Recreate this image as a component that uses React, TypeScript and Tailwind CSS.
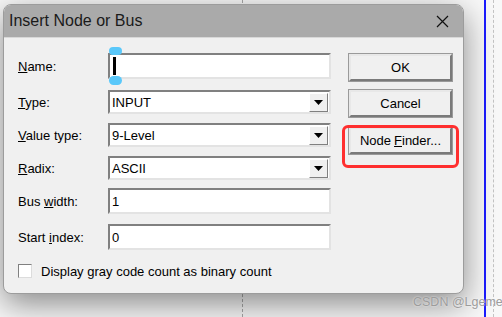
import React from 'react'

const fieldLabel = "text-[13px] text-black leading-none"

function Sunken({ children, className = "" }: { children?: React.ReactNode; className?: string }) {
  return (
    <div className={`relative flex items-center bg-white border-2 border-t-[#808080] border-l-[#808080] border-b-[#e3e3e3] border-r-[#e3e3e3] ${className}`}>
      {children}
    </div>
  )
}

function Combo({ value }: { value: string }) {
  return (
    <Sunken className="h-[24px] w-[223px]">
      <span className="flex-1 pl-[2px] text-[13px] leading-none">{value}</span>
      <div className="mr-[1px] flex h-[19px] w-[19px] items-center justify-center bg-[#f0f0f0] border border-t-white border-l-white border-b-[#808080] border-r-[#808080]">
        <svg width="9" height="5" viewBox="0 0 9 5"><path d="M0 0h9L4.5 5z" fill="#000" /></svg>
      </div>
    </Sunken>
  )
}

function Btn({ children }: { children: React.ReactNode }) {
  return (
    <div className="flex h-[27px] w-[103px] items-center justify-center bg-[#f0f0f0] border-2 border-t-[#e8e8e8] border-l-[#e8e8e8] border-b-[#7a7a7a] border-r-[#7a7a7a] outline outline-1 outline-[#9a9a9a] text-[13px] leading-none">
      {children}
    </div>
  )
}

export default function App() {
  return (
    <main className="relative h-[317px] w-[502px] overflow-hidden bg-[#f8f8f8]" style={{ fontFamily: '"Liberation Sans", Arial, sans-serif' }}>
      {/* canvas guide lines behind the dialog */}
      <div className="absolute left-[242px] top-0 h-full border-l border-dashed border-[#a8a8a8]" />
      <div className="absolute left-[484px] top-0 h-full w-[2px] bg-[#1b1bff]" />
      <div className="absolute left-[493px] top-0 h-full border-l border-dashed border-[#c4c4c4]" />

      <section className="absolute left-[3px] top-[4px] flex h-[290px] w-[461px] flex-col overflow-hidden rounded-[8px] border border-[#9c9c9c] bg-[#f0f0f0] shadow-[0_10px_32px_rgba(0,0,0,0.45)]">
        <header className="flex h-[32px] items-center justify-between bg-[#aaaaaa] pl-[5px] pr-[14px]">
          <h1 className="text-[16px] leading-none text-[#1a1a1a]">Insert Node or Bus</h1>
          <svg width="13" height="13" viewBox="0 0 13 13"><path d="M1 1l11 11M12 1L1 12" stroke="#111" strokeWidth="1.2" /></svg>
        </header>

        <div className="flex flex-1 border-t border-[#d8d8d8] pl-[14px] pt-[15px]">
          <div className="flex flex-col">
            <div className="flex h-[26px] items-center">
              <span className={`${fieldLabel} w-[90px]`}><u>N</u>ame:</span>
              <Sunken className="h-[26px] w-[223px]">
                <div className="ml-[3px] h-[18px] w-[3px] bg-black" />
                <div className="absolute -top-[8px] left-[-1px] h-[8px] w-[13px] rounded-full bg-[#5ac8fa]" />
                <div className="absolute -bottom-[8px] left-[-1px] h-[9px] w-[13px] rounded-full bg-[#5ac8fa]" />
              </Sunken>
            </div>
            <div className="mt-[11px] flex h-[24px] items-center">
              <span className={`${fieldLabel} w-[90px]`}><u>T</u>ype:</span>
              <Combo value="INPUT" />
            </div>
            <div className="mt-[9px] flex h-[24px] items-center">
              <span className={`${fieldLabel} w-[90px]`}><u>V</u>alue type:</span>
              <Combo value="9-Level" />
            </div>
            <div className="mt-[9px] flex h-[24px] items-center">
              <span className={`${fieldLabel} w-[90px]`}><u>R</u>adix:</span>
              <Combo value="ASCII" />
            </div>
            <div className="mt-[8px] flex h-[26px] items-center">
              <span className={`${fieldLabel} w-[90px]`}>Bus <u>w</u>idth:</span>
              <Sunken className="h-[26px] w-[223px]"><span className="pl-[2px] text-[13px] leading-none">1</span></Sunken>
            </div>
            <div className="mt-[10px] flex h-[26px] items-center">
              <span className={`${fieldLabel} w-[90px]`}>Start <u>i</u>ndex:</span>
              <Sunken className="h-[26px] w-[223px]"><span className="pl-[2px] text-[13px] leading-none">0</span></Sunken>
            </div>
            <label className="mt-[14px] flex items-center">
              <div className="h-[14px] w-[14px] bg-white border border-t-[#808080] border-l-[#808080] border-b-[#dcdcdc] border-r-[#dcdcdc]" />
              <span className="ml-[9px] text-[13px] leading-none">Display <u>g</u>ray code count as binary count</span>
            </label>
          </div>

          <div className="ml-[18px] flex flex-col gap-[9px] pt-[1px]">
            <div className="h-[27px]"><Btn>OK</Btn></div>
            <Btn>Cancel</Btn>
            <div className="relative mt-[1px]">
              <Btn>Node <u className="ml-[3px]">F</u>inder...</Btn>
              <div className="absolute left-[-7px] top-[-2px] h-[43px] w-[117px] rounded-[6px] border-[3px] border-[#ff2f2f]" />
            </div>
          </div>
        </div>
      </section>

      <span className="absolute left-[413px] top-[296px] whitespace-nowrap text-[12.5px] leading-none text-[#9c9c9c]" style={{ textShadow: '0 0 2px rgba(255,255,255,0.8)' }}>CSDN @Lgeme</span>
    </main>
  )
}
